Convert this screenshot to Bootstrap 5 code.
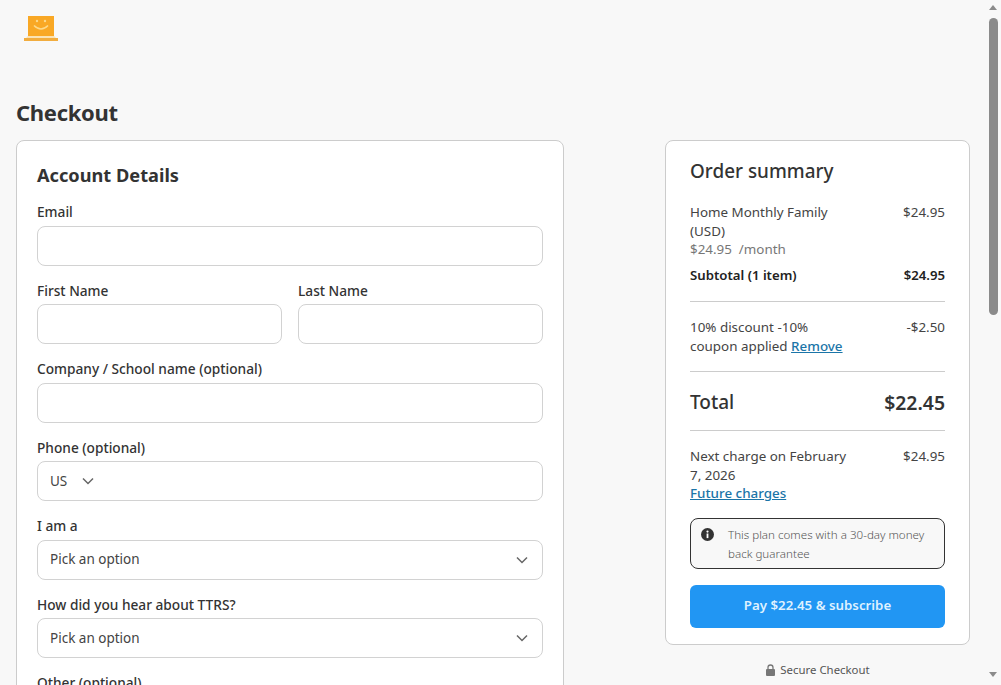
<!doctype html>
<html lang="en">
<head>
<meta charset="utf-8">
<title>Checkout</title>
<link href="https://cdn.jsdelivr.net/npm/bootstrap@5.3.0/dist/css/bootstrap.min.css" rel="stylesheet">
<style>
html,body{height:685px;overflow:hidden}
body{background:#f8f8f8;color:#333;font-family:"Noto Sans","Open Sans",sans-serif;font-size:13.4px}
.shell{height:685px}
.page{width:986px;padding:0 16px;flex:none}
.logo-box{height:97px;padding:13px 0 0 7px}
.page-title{font-size:22px;font-weight:700;line-height:30px;margin:0 0 13px;letter-spacing:-.3px;color:#333}
.panel{background:#fff;border:1px solid #ccc;border-radius:8px}
.form-panel{width:548px;height:700px;padding:20px;flex:none}
.form-title{font-size:18.2px;font-weight:700;line-height:28px;margin:0 0 12px}
.fld{margin-bottom:14px}
.fld-label{display:block;font-weight:500;font-size:13.7px;line-height:21px;margin-bottom:3.5px;color:#333}
.fld-box{display:flex;align-items:center;justify-content:space-between;height:40px;border:1px solid #d2d2d2;border-radius:8px;background:#fff;padding:0 13px 0 12px;color:#444;font-size:13.5px}
.fld-box svg{flex:none}
.phone-box{gap:14px}
.sum-panel{width:305px;height:505px;padding:16px 24px 0;flex:none}
.sum-title{font-size:18.9px;font-weight:500;line-height:28px;margin:0 0 18px}
.sum-row{display:flex;justify-content:space-between;line-height:18.5px;color:#444}
.sum-row>div:first-child{width:170px}
.muted-line{color:#777}
.strong-row{font-weight:600;font-size:13.2px;color:#222;margin-top:7px;margin-bottom:17px}
.sum-rule{border-top:1px solid #ccc;margin:0}
.rule-top{margin-bottom:16px}
.rule-mid{margin-top:16px}
.rule-low{margin-bottom:16px}
.total-row{display:flex;justify-content:space-between;align-items:center;font-size:19px;font-weight:500;height:58px;padding-top:3px;color:#333}
.total-row b{font-weight:600;font-size:19.4px}
.sum-link{color:#1b75a8;font-weight:500;text-decoration:underline}
.promise{display:flex;gap:14px;border:1px solid #333;border-radius:8px;background:#f8f8f8;padding:6px 8px 6px 10px;margin:15px 0 16px;color:#555;font-size:11.6px;font-weight:300;line-height:19px;height:51px}
.promise svg{flex:none;margin-top:3px}
.pay-btn{display:block;width:100%;height:43px;border:0;border-radius:6px;background:#2196f3;color:#dff1ff;font-weight:600;font-size:13.3px}
.secure{font-size:11.4px;color:#555;line-height:18px;margin-top:16px}
.side-col{width:305px}
.fake-scroll{width:15px;flex:none;background:#f8f8f8;position:relative}
.fake-scroll .thumb{position:absolute;left:3px;top:18px;width:9px;height:297px;background:#8b8b8b;border-radius:5px}
.fake-scroll .up,.fake-scroll .down{position:absolute;left:3px;width:0;height:0;border-left:4.5px solid transparent;border-right:4.5px solid transparent}
.fake-scroll .up{top:5px;border-bottom:5px solid #8b8b8b}
.fake-scroll .down{bottom:8px;border-top:5px solid #8b8b8b}
</style>
</head>
<body>
<div class="shell d-flex">
  <div class="page">
    <div class="logo-box">
      <svg width="36" height="30" viewBox="0 0 36 30">
        <rect x="5" y="3" width="26" height="20" fill="#f9a825"/>
        <path d="M1 27 L5 23 H31 L35 27 Z" fill="#fbe3b4"/>
        <rect x="1" y="25" width="34" height="3" fill="#f2ad3f"/>
        <circle cx="14" cy="8" r="1.2" fill="#fdd98a"/>
        <circle cx="22" cy="8" r="1.2" fill="#fdd98a"/>
        <path d="M11 12.5 Q18 19.5 25 12.5" fill="none" stroke="#fdd98a" stroke-width="1.6"/>
      </svg>
    </div>
    <h1 class="page-title">Checkout</h1>
    <div class="d-flex justify-content-between">
      <div class="panel form-panel">
        <h2 class="form-title">Account Details</h2>
        <div class="fld"><label class="fld-label">Email</label><div class="fld-box"></div></div>
        <div class="row g-0 gap-3 flex-nowrap">
          <div class="col fld"><label class="fld-label">First Name</label><div class="fld-box"></div></div>
          <div class="col fld"><label class="fld-label">Last Name</label><div class="fld-box"></div></div>
        </div>
        <div class="fld"><label class="fld-label">Company / School name (optional)</label><div class="fld-box"></div></div>
        <div class="fld"><label class="fld-label">Phone (optional)</label>
          <div class="fld-box justify-content-start phone-box"><span>US</span>
            <svg width="14" height="14" viewBox="0 0 14 14"><path d="M2 4.5 7 9.5 12 4.5" fill="none" stroke="#666" stroke-width="1.5"/></svg>
          </div></div>
        <div class="fld"><label class="fld-label">I am a</label>
          <div class="fld-box"><span>Pick an option</span>
            <svg width="14" height="14" viewBox="0 0 14 14"><path d="M2 4.5 7 9.5 12 4.5" fill="none" stroke="#666" stroke-width="1.5"/></svg>
          </div></div>
        <div class="fld"><label class="fld-label">How did you hear about TTRS?</label>
          <div class="fld-box"><span>Pick an option</span>
            <svg width="14" height="14" viewBox="0 0 14 14"><path d="M2 4.5 7 9.5 12 4.5" fill="none" stroke="#666" stroke-width="1.5"/></svg>
          </div></div>
        <div class="fld"><label class="fld-label">Other (optional)</label><div class="fld-box"></div></div>
      </div>
      <div class="side-col">
        <div class="panel sum-panel">
          <h2 class="sum-title">Order summary</h2>
          <div class="sum-row"><div>Home Monthly Family (USD)<br><span class="muted-line">$24.95 &nbsp;/month</span></div><div>$24.95</div></div>
          <div class="sum-row strong-row"><div>Subtotal (1 item)</div><div>$24.95</div></div>
          <div class="sum-rule rule-top"></div>
          <div class="sum-row"><div class="text-nowrap">10% discount -10%<br>coupon applied <a class="sum-link" href="#">Remove</a></div><div>-$2.50</div></div>
          <div class="sum-rule rule-mid"></div>
          <div class="total-row"><span>Total</span><b>$22.45</b></div>
          <div class="sum-rule rule-low"></div>
          <div class="sum-row"><div>Next charge on February 7, 2026<br><a class="sum-link" href="#">Future charges</a></div><div>$24.95</div></div>
          <div class="promise">
            <svg width="13" height="13" viewBox="0 0 13 13"><circle cx="6.5" cy="6.5" r="6.5" fill="#333"/><rect x="5.6" y="5.5" width="1.8" height="4.6" fill="#fff"/><circle cx="6.5" cy="3.6" r="1.1" fill="#fff"/></svg>
            <div>This plan comes with a 30-day money back guarantee</div>
          </div>
          <button class="pay-btn" type="button">Pay $22.45 &amp; subscribe</button>
        </div>
        <div class="secure d-flex justify-content-center align-items-center gap-1">
          <svg width="11" height="12" viewBox="0 0 11 12"><path d="M3 5V3.5a2.5 2.5 0 0 1 5 0V5" fill="none" stroke="#777" stroke-width="1.3"/><rect x="1" y="5" width="9" height="7" rx="1" fill="#777"/></svg>
          <span>Secure Checkout</span>
        </div>
      </div>
    </div>
  </div>
  <div class="fake-scroll"><span class="up"></span><span class="thumb"></span><span class="down"></span></div>
</div>
</body>
</html>
